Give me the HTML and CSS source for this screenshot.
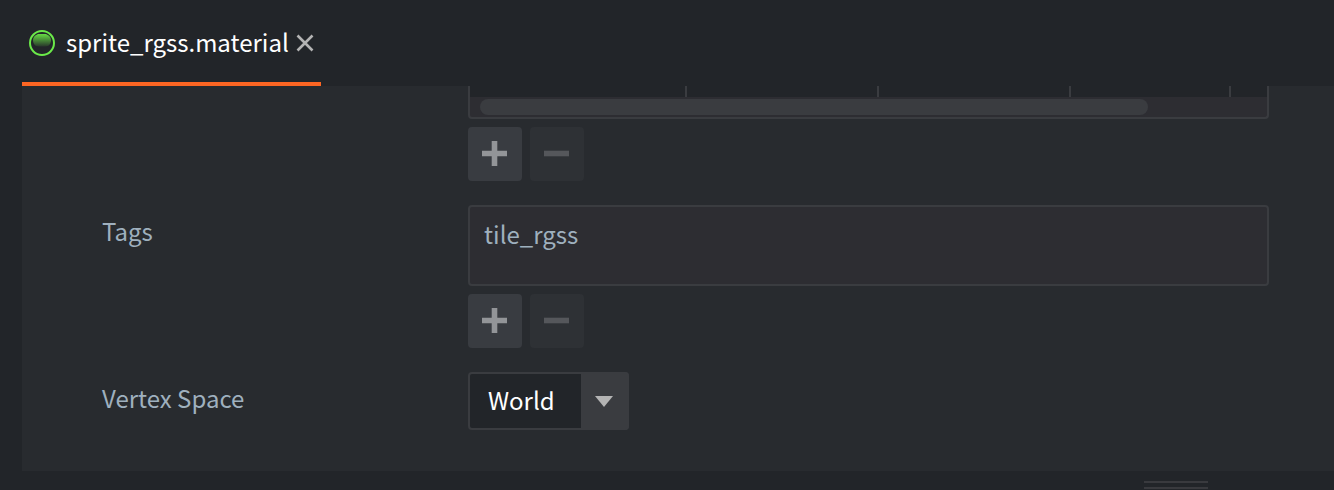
FILE: index.html
```html
<!DOCTYPE html>
<html lang="en">
<head>
<meta charset="utf-8">
<title>sprite_rgss.material</title>
<link rel="stylesheet" href="styles.css">
</head>
<body>
<header class="tabs">
  <div class="tab">
    <svg class="tab-icon" width="26" height="26" viewBox="0 0 26 26" aria-hidden="true">
      <defs>
        <linearGradient id="shine" x1="0" y1="0" x2="0" y2="1">
          <stop offset="0" stop-color="#65dc43"/>
          <stop offset="1" stop-color="#65dc43" stop-opacity="0.1"/>
        </linearGradient>
      </defs>
      <circle cx="13" cy="13" r="12" fill="none" stroke="#6bea49" stroke-width="2"/>
      <path d="M9 4h8q5 2 5 6 0 4-3 6-6 1-12 0-3-2-3-6 0-4 5-6z" fill="url(#shine)"/>
    </svg>
    <span class="tab-title">sprite_rgss.material</span>
    <button class="tab-close" type="button" aria-label="Close">
      <svg width="18" height="18" viewBox="0 0 18 18"><path d="M1.5 1.5l15 15M16.5 1.5l-15 15" stroke="#b4b4b4" stroke-width="2.6"/></svg>
    </button>
  </div>
</header>
<main class="panel">
  <section class="row">
    <div class="field">
      <div class="grid-view">
        <div class="grid-cells"><span></span><span></span><span></span><span></span></div>
        <div class="scrollbar"><div class="thumb"></div></div>
      </div>
      <div class="actions">
        <button type="button" class="action" aria-label="Add"><svg width="26" height="26" viewBox="0 0 26 26"><path d="M0 9.700h9.700V0h5.600v9.700H25v5.600h-9.700V25H9.700v-9.700H0z"/></svg></button>
        <button type="button" class="action" aria-label="Remove" disabled><svg width="26" height="26" viewBox="0 0 26 26"><path d="M0 9.700h25v5.600H0z"/></svg></button>
      </div>
    </div>
  </section>
  <section class="row">
    <span class="label" id="tags-label">Tags</span>
    <div class="field">
      <ul class="list" aria-labelledby="tags-label"><li>tile_rgss</li></ul>
      <div class="actions">
        <button type="button" class="action" aria-label="Add tag"><svg width="26" height="26" viewBox="0 0 26 26"><path d="M0 9.700h9.700V0h5.600v9.700H25v5.600h-9.700V25H9.700v-9.700H0z"/></svg></button>
        <button type="button" class="action" aria-label="Remove tag" disabled><svg width="26" height="26" viewBox="0 0 26 26"><path d="M0 9.700h25v5.600H0z"/></svg></button>
      </div>
    </div>
  </section>
  <section class="row">
    <label class="label" for="vertex-space">Vertex Space</label>
    <div class="field">
      <div class="choice">
        <select id="vertex-space"><option>World</option><option>Local</option></select>
        <span class="choice-arrow"><svg width="18" height="11" viewBox="0 0 18 11"><path d="M0 0h18l-9 11z" fill="#b4b4b4"/></svg></span>
      </div>
    </div>
  </section>
</main>
<footer class="splitter"><span class="grip"></span></footer>
</body>
</html>
```
FILE: styles.css
```css
* { box-sizing: border-box; }

body {
  margin: 0;
  min-height: 100vh;
  display: flex;
  flex-direction: column;
  background: #222529;
  color: #9fb0be;
  font: 24px/36px "Noto Sans CJK SC", "Noto Sans", sans-serif;
}

button { border: 0; padding: 0; cursor: pointer; }

.tabs { display: flex; padding-left: 22px; }

.tab {
  display: flex;
  align-items: center;
  height: 86px;
  padding: 4px 7px 0;
  border-bottom: 4px solid #fd6623;
  color: #fff;
}

.tab-icon { margin-right: 11px; }

.tab-title { padding-bottom: 2px; white-space: nowrap; }

.tab-close { display: flex; margin-left: 7px; background: none; }

.panel {
  display: flex;
  flex-direction: column;
  gap: 24px;
  margin-left: 22px;
  padding: 0 65px 41px 80px;
  background: #282b2f;
}

.row {
  display: grid;
  grid-template-columns: 366px 1fr;
}

.field { grid-column: 2; min-width: 0; }

.label { grid-row: 1; padding-top: 8px; }

.grid-view {
  border: 2px solid #3a3c40;
  border-top: 0;
  border-radius: 0 0 4px 4px;
  background: #2d2d32;
}

.grid-cells {
  display: grid;
  grid-template-columns: 217px 192px 192px 160px;
  height: 11px;
  background: #222529;
}

.grid-cells span { border-right: 2px solid #3a3c40; }

.scrollbar { padding: 2px 10px; }

.thumb {
  width: 86%;
  height: 16px;
  border-radius: 8px;
  background: #3a3c40;
}

.actions { display: flex; gap: 8px; margin-top: 8px; }

.action {
  display: flex;
  align-items: center;
  justify-content: center;
  width: 54px;
  height: 54px;
  border-radius: 4px;
  background: #393c41;
}

.action path { fill: #939598; }

.action:disabled { background: #2e3135; cursor: default; }

.action:disabled path { fill: #55575b; }

.list {
  min-height: 81px;
  margin: 0;
  padding: 9px 14px;
  border: 2px solid #3a3c40;
  border-radius: 4px;
  background: #2d2d32;
  list-style: none;
}

.choice { position: relative; width: 161px; }

.choice select {
  display: block;
  width: 100%;
  height: 58px;
  padding: 0 48px 2px 18px;
  border: 2px solid #3a3c40;
  border-radius: 4px;
  appearance: none;
  background: #222529;
  color: #fff;
  font: inherit;
}

.choice-arrow {
  position: absolute;
  inset: 0 0 0 auto;
  display: flex;
  align-items: center;
  justify-content: center;
  width: 48px;
  padding: 1px 2px 0 0;
  border-radius: 0 4px 4px 0;
  background: #3a3c40;
  pointer-events: none;
}

.splitter {
  display: flex;
  justify-content: flex-end;
  padding: 10px 126px 0 0;
}

.grip {
  width: 64px;
  height: 8px;
  border: solid #393a3e;
  border-width: 2px 0;
}
```
